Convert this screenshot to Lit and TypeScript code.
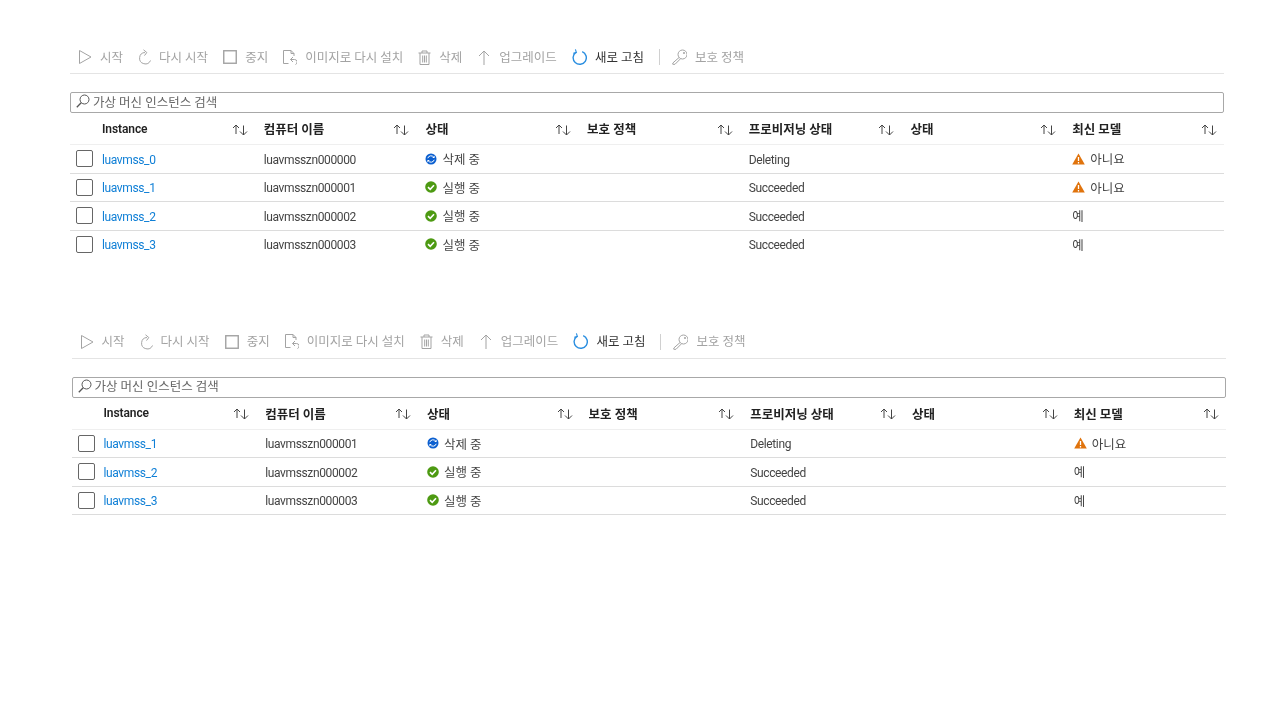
import { html, css, LitElement, svg } from 'lit';
import { customElement, property } from 'lit/decorators.js';

interface VmRow {
  name: string;
  computer: string;
  deleting: boolean;
  provisioning: string;
  latest: boolean;
}

const columns = ['Instance', '컴퓨터 이름', '상태', '보호 정책', '프로비저닝 상태', '상태', '최신 모델'];

const stroke = (body: unknown, w: number, h: number) => html`<svg
  width=${w}
  height=${h}
  viewBox="0 0 ${w} ${h}"
  fill="none"
  stroke="currentColor"
  stroke-width="1"
>
  ${body}
</svg>`;

const icons = {
  play: stroke(svg`<path d="M1.5 1.5 L13 8 L1.5 14.5 Z" />`, 14, 16),
  restart: stroke(
    svg`<path d="M7 3.5 A5.7 5.7 0 1 0 12.5 11.5" /><path d="M5.5 .8 L8.8 3.5 L6.5 6.6" />`,
    13,
    16,
  ),
  stop: stroke(svg`<rect x=".75" y=".75" width="12.5" height="12.5" stroke-width="1.4" />`, 14, 14),
  reinstall: stroke(
    svg`<path d="M5.5 13.5 H.5 V.5 H8 L11 3.5 V6" /><path d="M8 .5 V3.5 H11" /><path d="M7.5 9.5 L10 7 M7.5 9.5 L10 12 M7.5 9.5 H11.5 A2.6 2.6 0 0 1 12.5 14.5" />`,
    14,
    15,
  ),
  trash: stroke(
    svg`<path d="M.5 3 H12.5 M4 3 V1 H9 V3 M2 3 V14.5 H11 V3 M4.7 5.5 V12.5 M6.5 5.5 V12.5 M8.3 5.5 V12.5" />`,
    13,
    15,
  ),
  up: stroke(svg`<path d="M7 15 V1 M2 6 L7 1 L12 6" />`, 14, 15),
  refresh: html`<svg width="15" height="17" viewBox="0 0 15 17" fill="none" stroke="#2a8ee0" stroke-width="1.4">
    <path d="M3.8 3.4 A6.6 6.6 0 1 0 10.2 2.6" />
    <path d="M3.4 .4 L4.4 3.6 L1.2 4.2" stroke-width="1.1" />
  </svg>`,
  key: stroke(
    svg`<circle cx="10.5" cy="5.5" r="4.5" /><path d="M7.2 8.4 L.8 14 V15.3 H3 L8.6 9.7" /><circle cx="12" cy="4" r=".7" />`,
    15,
    16,
  ),
  search: html`<svg width="14" height="14" viewBox="0 0 14 14" fill="none" stroke="#555" stroke-width="1">
    <circle cx="8.5" cy="5.5" r="4.5" />
    <path d="M5.2 8.8 L.8 13.2" stroke-width="1.3" />
  </svg>`,
  sort: html`<svg class="sort" width="16" height="12" viewBox="0 0 16 12" fill="none" stroke="#444" stroke-width="1">
    <path d="M4 10 V1 M1 4 L4 1 L7 4" />
    <path d="M11.5 1.5 V11 M8 7.5 L11.5 11 L15 7.5" />
  </svg>`,
  syncing: html`<svg width="12" height="12" viewBox="0 0 12 12">
    <circle cx="6" cy="6" r="5.5" fill="#0b5fd0" />
    <path d="M2.8 5.2 A3.3 3.3 0 0 1 8.8 4.4 M9.2 6.8 A3.3 3.3 0 0 1 3.2 7.6" fill="none" stroke="#fff" stroke-width="1" />
    <path d="M9.6 2.6 V5 H7.2 Z M2.4 9.4 V7 H4.8 Z" fill="#fff" />
  </svg>`,
  ok: html`<svg width="12" height="12" viewBox="0 0 12 12">
    <circle cx="6" cy="6" r="5.8" fill="#4d9a12" />
    <path d="M3 6.2 L5.2 8.3 L9 4.2" fill="none" stroke="#fff" stroke-width="1.6" />
  </svg>`,
  warn: html`<svg width="13" height="12" viewBox="0 0 13 12">
    <path d="M6.5 .5 L12.8 11.5 H.2 Z" fill="#e0730c" />
    <path d="M6.5 4 V8 M6.5 9 V10.4" stroke="#fff" stroke-width="1.3" />
  </svg>`,
};

@customElement('vm-table')
export class VmTable extends LitElement {
  static styles = css`
    :host {
      display: block;
      width: 1154px;
      font-family: Roboto, 'Noto Sans CJK KR', sans-serif;
      font-size: 12.5px;
      color: #444;
      filter: blur(0.4px);
    }
    .toolbar {
      display: flex;
      align-items: center;
      height: 32px;
      padding-left: 8px;
      border-bottom: 1px solid #e4e4e4;
      color: #a3a3a3;
    }
    .tool {
      display: flex;
      align-items: center;
      gap: 8px;
      margin-right: 15px;
      white-space: nowrap;
    }
    .tool span {
      margin-bottom: 2px;
    }
    .tool.active {
      color: #333;
    }
    .divider {
      width: 1px;
      height: 16px;
      background: #d0d0d0;
      margin-right: 12px;
    }
    .search {
      display: flex;
      align-items: center;
      gap: 3px;
      box-sizing: border-box;
      height: 21px;
      margin-top: 18px;
      padding: 0 0 3px 5px;
      border: 1px solid #a8a8a8;
      border-radius: 2px;
      color: #666;
    }
    .row {
      display: grid;
      grid-template-columns: 32px repeat(6, 161.7px) 152px;
      align-items: center;
      box-sizing: border-box;
      height: 28.5px;
      border-bottom: 1px solid #dcdcdc;
    }
    .row:last-child {
      border-bottom-color: var(--last-border, transparent);
    }
    .row.head {
      height: 32px;
      border-bottom-color: #efefef;
      font-weight: 600;
      color: #222;
    }
    .head .cell {
      display: flex;
      justify-content: space-between;
      align-items: center;
      padding-right: 16px;
    }
    .head .cell:last-child {
      padding-right: 7px;
    }
    .sort {
      margin-top: 2px;
    }
    .check {
      box-sizing: border-box;
      width: 17px;
      height: 17px;
      margin-left: 6px;
      border: 1px solid #666;
      border-radius: 2px;
    }
    a {
      color: #0f7fd6;
      text-decoration: none;
    }
    .lat {
      font-size: 12px;
      letter-spacing: -0.37px;
      margin-top: 2px;
    }
    .head .lat {
      letter-spacing: -0.1px;
      margin-top: 0;
    }
    .status {
      display: flex;
      align-items: center;
      gap: 5px;
    }
  `;

  @property({ attribute: false }) rows: VmRow[] = [];

  private tool(icon: unknown, label: string, active = false) {
    return html`<div class="tool ${active ? 'active' : ''}">${icon}<span>${label}</span></div>`;
  }

  render() {
    return html`
      <div class="toolbar">
        ${this.tool(icons.play, '시작')} ${this.tool(icons.restart, '다시 시작')} ${this.tool(icons.stop, '중지')}
        ${this.tool(icons.reinstall, '이미지로 다시 설치')} ${this.tool(icons.trash, '삭제')}
        ${this.tool(icons.up, '업그레이드')} ${this.tool(icons.refresh, '새로 고침', true)}
        <span class="divider"></span>
        ${this.tool(icons.key, '보호 정책')}
      </div>
      <div class="search">${icons.search}<span>가상 머신 인스턴스 검색</span></div>
      <div class="row head">
        <span></span>
        ${columns.map(
          (c) => html`<div class="cell"><span class=${c === 'Instance' ? 'lat' : ''}>${c}</span>${icons.sort}</div>`,
        )}
      </div>
      ${this.rows.map(
        (r) => html`<div class="row">
          <div class="check"></div>
          <a class="lat" href="#">${r.name}</a>
          <span class="lat">${r.computer}</span>
          <span class="status">
            ${r.deleting ? icons.syncing : icons.ok}${r.deleting ? '삭제 중' : '실행 중'}
          </span>
          <span></span>
          <span class="lat">${r.provisioning}</span>
          <span></span>
          <span class="status">${r.latest ? '예' : html`${icons.warn}아니요`}</span>
        </div>`,
      )}
    `;
  }
}

@customElement('app-root')
export class AppRoot extends LitElement {
  static styles = css`
    :host {
      display: block;
      height: 720px;
      background: #fff;
      overflow: hidden;
    }
    .page {
      padding: 41px 0 0 70px;
    }
    vm-table + vm-table {
      margin: 66.5px 0 0 1.5px;
      --last-border: #dcdcdc;
    }
  `;

  render() {
    const first: VmRow[] = [
      { name: 'luavmss_0', computer: 'luavmsszn000000', deleting: true, provisioning: 'Deleting', latest: false },
      { name: 'luavmss_1', computer: 'luavmsszn000001', deleting: false, provisioning: 'Succeeded', latest: false },
      { name: 'luavmss_2', computer: 'luavmsszn000002', deleting: false, provisioning: 'Succeeded', latest: true },
      { name: 'luavmss_3', computer: 'luavmsszn000003', deleting: false, provisioning: 'Succeeded', latest: true },
    ];
    const second: VmRow[] = [
      { name: 'luavmss_1', computer: 'luavmsszn000001', deleting: true, provisioning: 'Deleting', latest: false },
      { name: 'luavmss_2', computer: 'luavmsszn000002', deleting: false, provisioning: 'Succeeded', latest: true },
      { name: 'luavmss_3', computer: 'luavmsszn000003', deleting: false, provisioning: 'Succeeded', latest: true },
    ];
    return html`<div class="page">
      <vm-table .rows=${first}></vm-table>
      <vm-table .rows=${second}></vm-table>
    </div>`;
  }
}
